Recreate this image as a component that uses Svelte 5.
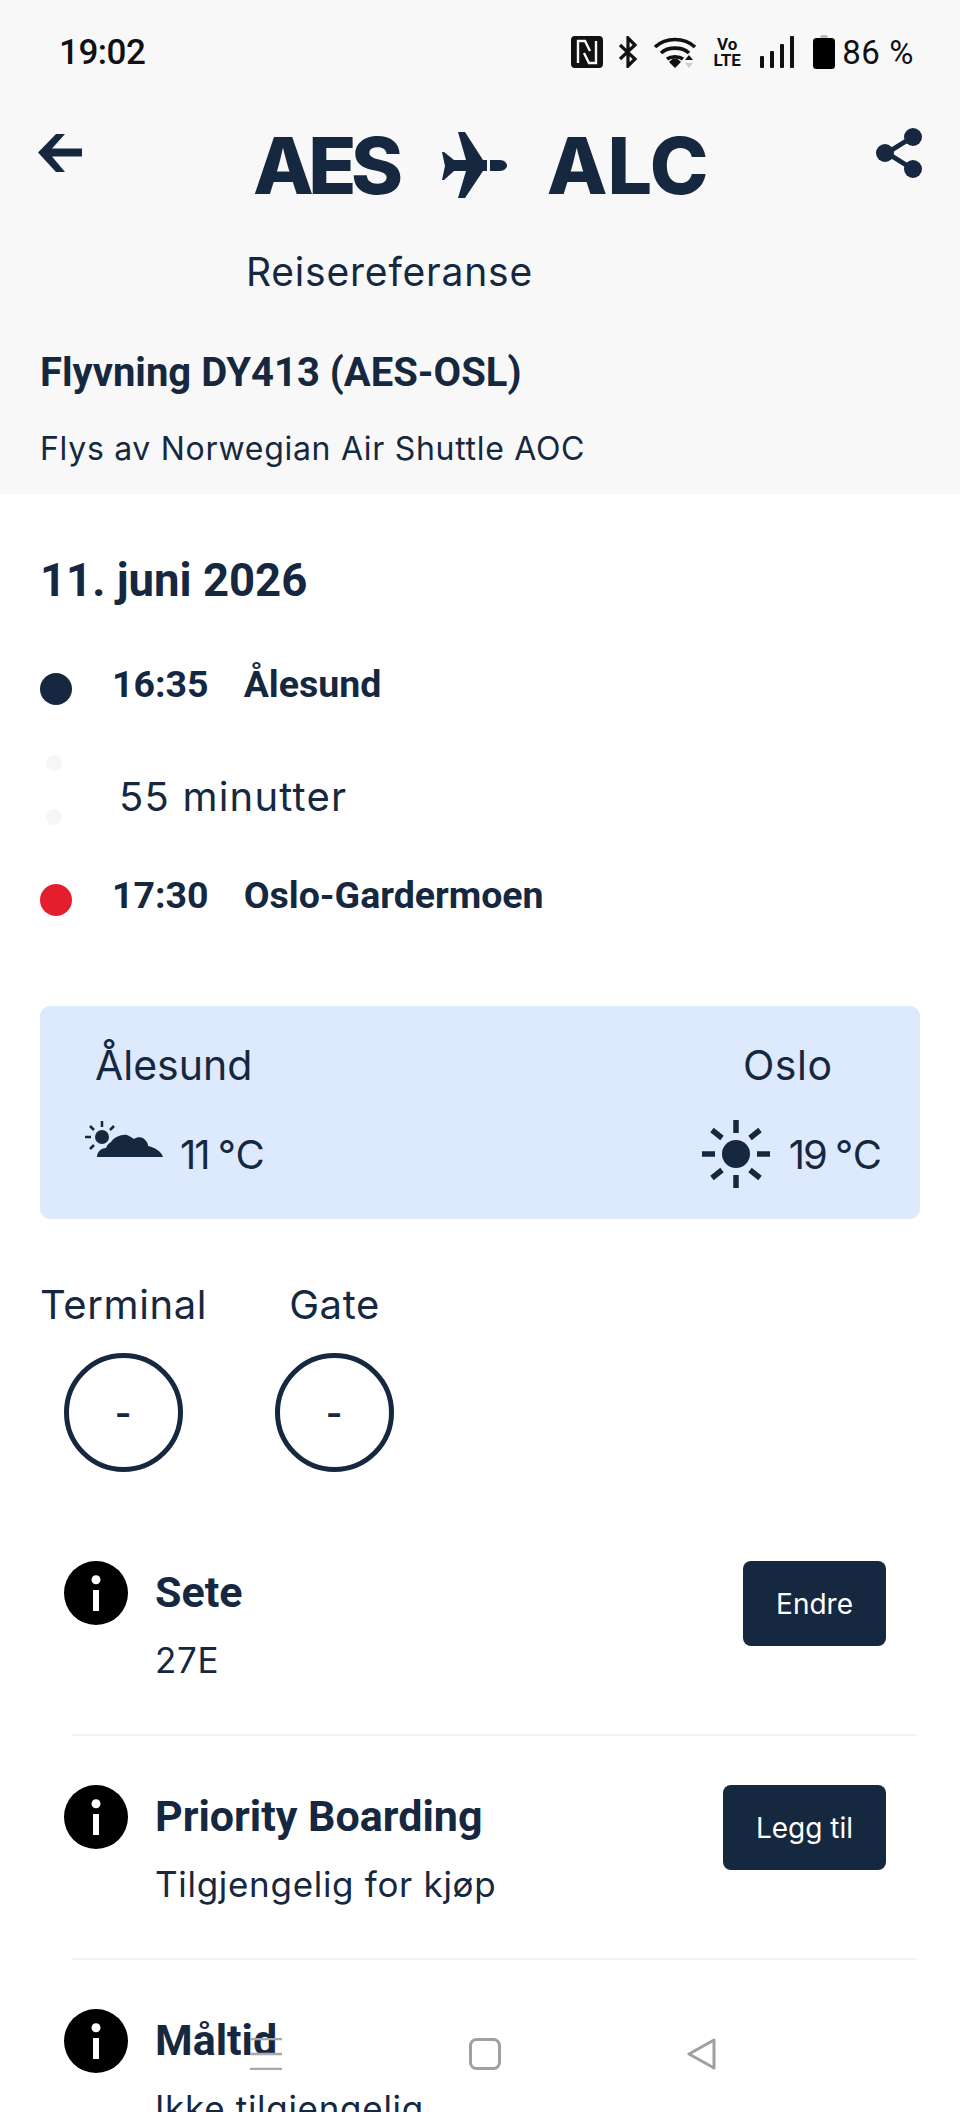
<script>
  const flight = { number: 'DY413', route: 'AES-OSL', operator: 'Norwegian Air Shuttle AOC' };

  const items = [
    { title: 'Sete', sub: '27E', action: 'Endre' },
    { title: 'Priority Boarding', sub: 'Tilgjengelig for kjøp', action: 'Legg til' },
    { title: 'Måltid', sub: 'Ikke tilgjengelig', action: null },
  ];
</script>

<div class="page">
  <header class="head">
    <div class="status">
      <span class="time">19:02</span>
      <div class="status-icons">
        <svg class="i-nfc" viewBox="0 0 32 32"><rect width="32" height="32" rx="4" fill="#111"/><path d="M7 27V5h7l5 10M25 5v22h-7l-5-10" fill="none" stroke="#f8f8f9" stroke-width="2.4"/></svg>
        <svg class="i-bt" viewBox="0 0 20 32"><path d="M2 9l15 14-7 7V2l7 7L2 23" fill="none" stroke="#111" stroke-width="3.2"/></svg>
        <svg class="i-wifi" viewBox="0 0 44 32"><path d="M2 11c11-10 29-10 40 0M8 17c7-6.500 21-6.500 28 0M14 23c4-3 12-3 16 0" fill="none" stroke="#111" stroke-width="3.600"/><path d="M16 26l4-3.500h4l4 3.500-6 6z" fill="#111"/><path d="M36 19l4 5h-8z" fill="#111"/><path d="M36 32l4-5h-8z" fill="#ccc"/></svg>
        <span class="volte">Vo<br />LTE</span>
        <svg class="i-signal" viewBox="0 0 34 32"><g fill="#111"><rect x="0" y="20" width="4" height="12" rx="1"/><rect x="10" y="15" width="4" height="17" rx="1"/><rect x="20" y="8" width="4" height="24" rx="1"/><rect x="30" y="0" width="4" height="32" rx="1"/></g></svg>
        <svg class="i-batt" viewBox="0 0 22 34"><path d="M7 3l1-3h6l1 3z" fill="#bbb"/><rect y="3" width="22" height="31" rx="3.500" fill="#000"/></svg>
        <span class="pct">86 %</span>
      </div>
    </div>

    <div class="title-row">
      <svg class="back" viewBox="0 0 45 40"><path d="M45 15.500H15L28 1H19L1 19.500 19 39h9L15 23.500H45z" fill="#16283f"/></svg>
      <div class="route">
        <span class="from">AES</span>
        <svg class="plane" viewBox="0 0 66 66"><path d="M17 0h7l18 28h4v11h-4L24 66h-7l8-27H13L3 48H1l3-14-3-14h2l10 8h12z" fill="#16283f"/><path d="M49 28h10c4 0 7 3 7 5.500s-3 5.500-7 5.500H49z" fill="#16283f"/></svg>
        <span class="to">ALC</span>
      </div>
      <svg class="share" viewBox="0 0 46 50"><path d="M35 10L11 25l24 15" fill="none" stroke="#16283f" stroke-width="5"/><circle cx="37" cy="9" r="9" fill="#16283f"/><circle cx="9" cy="25" r="9" fill="#16283f"/><circle cx="37" cy="41" r="9" fill="#16283f"/></svg>
    </div>

    <p class="ref">Reisereferanse</p>
    <h2>Flyvning {flight.number} ({flight.route})</h2>
    <p class="operator">Flys av {flight.operator}</p>
  </header>

  <main>
    <h1>11. juni 2026</h1>

    <div class="timeline">
      <div class="stop">
        <span class="dot navy"></span>
        <b class="at">16:35</b>
        <b>Ålesund</b>
      </div>
      <div class="duration">
        <div class="faint"><i></i><i></i></div>
        <span>55 minutter</span>
      </div>
      <div class="stop">
        <span class="dot red"></span>
        <b class="at">17:30</b>
        <b>Oslo-Gardermoen</b>
      </div>
    </div>

    <section class="weather">
      <div class="wx left">
        <div class="city">Ålesund</div>
        <div class="temp">
          <svg class="cloud" viewBox="0 0 78 37"><g stroke="#16283f" stroke-width="2.500" fill="none"><path d="M17 0v6M5 5l4 4M29 5l-4 4M0 16h6M5 28l4-4"/></g><circle cx="17" cy="16" r="7" fill="#16283f"/><path d="M12 36c0-5 4-9 9-9 1-3 3-5 5-6 3-5 11-8 16-7 3 1 5 3 7 4 4-3 10-2 12 2 2 2 2 4 2 5 6 1 14 6 15 11z" fill="#16283f"/></svg>
          <span>11 ℃</span>
        </div>
      </div>
      <div class="wx right">
        <div class="city">Oslo</div>
        <div class="temp">
          <svg class="sun" viewBox="0 0 68 68"><circle cx="34" cy="34" r="14" fill="#16283f"/><g stroke="#16283f" stroke-width="5.500"><path d="M34 0v13M34 55v13M0 34h13M55 34h13M10 10l10 8M58 10l-10 8M10 58l10-8M58 58l-10-8"/></g></svg>
          <span>19 ℃</span>
        </div>
      </div>
    </section>

    <section class="gates">
      <div class="gate terminal">
        <span>Terminal</span>
        <div class="ring">-</div>
      </div>
      <div class="gate">
        <span>Gate</span>
        <div class="ring">-</div>
      </div>
    </section>

    <section class="items">
      {#each items as item}
        <div class="item">
          <svg class="info" viewBox="0 0 64 64"><circle cx="32" cy="32" r="32" fill="#000"/><circle cx="32" cy="18.700" r="4.500" fill="#fff"/><rect x="29" y="29" width="6" height="21" fill="#fff"/></svg>
          <div class="text">
            <h3>{item.title}</h3>
            <p>{item.sub}</p>
          </div>
          {#if item.action}
            <button>{item.action}</button>
          {/if}
        </div>
      {/each}
    </section>
  </main>

  <nav class="sysnav">
    <svg class="n-menu" viewBox="0 0 32 32"><path d="M0 1h32M0 16h32M0 31h32" stroke="#a9a9a9" stroke-width="2.500"/></svg>
    <svg class="n-home" viewBox="0 0 32 32"><rect x="1.500" y="1.500" width="29" height="29" rx="6" fill="none" stroke="#a0a0a0" stroke-width="3"/></svg>
    <svg class="n-back" viewBox="0 0 32 32"><path d="M28 2v28L3 16z" fill="none" stroke="#a0a0a0" stroke-width="3" stroke-linejoin="round"/></svg>
  </nav>
</div>

<style>
  :global(body) {
    margin: 0;
    background: #fff;
  }

  .page {
    position: relative;
    width: 960px;
    height: 2112px;
    overflow: hidden;
    background: #fff;
    color: #16283f;
    font-family: Inter, sans-serif;
  }

  .head {
    height: 494px;
    box-sizing: border-box;
    background: #f8f8f9;
    padding: 34px 0 0 40px;
  }

  .status {
    display: flex;
    align-items: center;
    justify-content: space-between;
    height: 36px;
    padding: 0 46px 0 19px;
    color: #111;
  }

  .time {
    font: 500 35px Roboto, sans-serif;
    letter-spacing: -0.5px;
  }

  .status-icons {
    display: flex;
    align-items: center;
  }

  .status-icons svg {
    display: block;
    height: 32px;
  }

  .i-nfc { width: 32px; }
  .i-bt { width: 20px; margin-left: 15px; }
  .i-wifi { width: 44px; margin-left: 15px; }
  .i-signal { width: 34px; margin-left: 19px; }
  .status-icons .i-batt { width: 22px; height: 34px; margin-left: 19px; }

  .volte {
    margin-left: 16px;
    width: 28px;
    font: 700 17px/16px Roboto, sans-serif;
    text-align: center;
  }

  .pct {
    margin-left: 7px;
    font: 400 33px Roboto, sans-serif;
    letter-spacing: 0.6px;
  }

  .title-row {
    display: flex;
    align-items: flex-start;
    margin: 60px 38px 0 -3px;
    height: 70px;
  }

  .back {
    width: 45px;
    height: 40px;
    margin-top: 3px;
  }

  .route {
    display: flex;
    align-items: center;
    margin-left: 171px;
    font-weight: 800;
    font-size: 79px;
    line-height: 70px;
  }

  .from {
    letter-spacing: -5.5px;
  }

  .to {
    letter-spacing: 0;
  }

  .plane {
    width: 66px;
    height: 66px;
    margin: 0 40px 0 43px;
  }

  .share {
    width: 46px;
    height: 50px;
    margin-left: auto;
    margin-top: -2px;
  }

  .ref {
    margin: 48px 0 0 206px;
    font-size: 39px;
    line-height: 48px;
    letter-spacing: 0.8px;
  }

  h2 {
    margin: 54px 0 0;
    font: 700 40px/46px Roboto, sans-serif;
  }

  .operator {
    margin: 33px 0 0;
    font-size: 32px;
    line-height: 40px;
    letter-spacing: 0.7px;
  }

  main {
    padding: 0 40px;
  }

  h1 {
    margin: 61px 0 0;
    font: 700 45.5px/52px Roboto, sans-serif;
  }

  .timeline {
    margin-top: 55px;
  }

  .stop {
    display: flex;
    align-items: center;
    height: 44px;
    font: 700 37.5px/44px Roboto, sans-serif;
  }

  .stop b {
    font-weight: 700;
  }

  .dot {
    width: 32px;
    height: 32px;
    margin-top: 10px;
    border-radius: 50%;
  }

  .navy { background: #16283f; }
  .red { background: #e31f2e; }

  .at {
    margin: 0 35px 0 40px;
  }

  .duration {
    display: flex;
    align-items: center;
    height: 167px;
    font-size: 40px;
    letter-spacing: 1.2px;
  }

  .duration span {
    margin: 14px 0 0 -2px;
  }

  .faint {
    display: flex;
    flex-direction: column;
    gap: 38px;
    width: 81px;
    padding-left: 6px;
    box-sizing: border-box;
  }

  .faint i {
    width: 16px;
    height: 16px;
    border-radius: 50%;
    background: #f6f6f6;
  }

  .weather {
    display: flex;
    justify-content: space-between;
    box-sizing: border-box;
    height: 213px;
    margin-top: 89px;
    padding: 32px 40px 0 45px;
    background: #dde9fd;
    border-radius: 10px;
  }

  .wx {
    display: flex;
    flex-direction: column;
  }

  .right {
    align-items: center;
  }

  .left .city {
    margin-left: 10px;
  }

  .city {
    font-size: 41px;
    line-height: 54px;
  }

  .right .city {
    margin-right: 6px;
    letter-spacing: 0.6px;
  }

  .temp {
    display: flex;
    align-items: center;
    height: 68px;
    margin-top: 28px;
    font-size: 40px;
    letter-spacing: -2px;
  }

  .cloud {
    width: 78px;
    height: 37px;
    margin: -30px 17px 0 0;
  }

  .sun {
    width: 68px;
    height: 68px;
    margin-right: 19px;
  }

  .gates {
    display: flex;
    gap: 68px;
    margin-top: 62px;
  }

  .gate {
    display: flex;
    flex-direction: column;
    align-items: center;
    font-size: 40px;
    line-height: 48px;
    letter-spacing: 0.6px;
  }

  .ring {
    display: flex;
    align-items: center;
    justify-content: center;
    box-sizing: border-box;
    width: 119px;
    height: 119px;
    margin: 24px 0 0;
    border: 5px solid #16283f;
    border-radius: 50%;
    font-size: 36px;
    font-weight: 600;
  }

  .items {
    margin: 89px 3px 0 32px;
  }

  .item {
    display: flex;
    align-items: flex-start;
    height: 172px;
    box-sizing: border-box;
    margin-left: -8px;
    margin-bottom: 52px;
    position: relative;
  }

  .item + .item::before {
    content: '';
    position: absolute;
    top: -51px;
    left: 8px;
    right: 0;
    height: 2px;
    background: #f4f4f4;
  }

  .info {
    flex: none;
    width: 64px;
    height: 64px;
  }

  .text {
    flex: 1;
    margin-left: 27px;
  }

  h3 {
    margin: 6px 0 0;
    font: 700 43px/50px Roboto, sans-serif;
  }

  .text p {
    margin: 21px 0 0;
    font-size: 35px;
    line-height: 44px;
    letter-spacing: 0.7px;
  }

  button {
    margin-right: 31px;
    padding: 0 33px;
    height: 85px;
    border: 0;
    border-radius: 8px;
    background: #16283f;
    color: #fff;
    font: 400 28px Inter, sans-serif;
  }

  .sysnav {
    position: absolute;
    left: 0;
    top: 2038px;
    width: 960px;
    height: 32px;
  }

  .sysnav svg {
    position: absolute;
    top: 0;
    width: 32px;
    height: 32px;
  }

  .n-menu { left: 250px; }
  .n-home { left: 469px; }
  .n-back { left: 686px; }
</style>
